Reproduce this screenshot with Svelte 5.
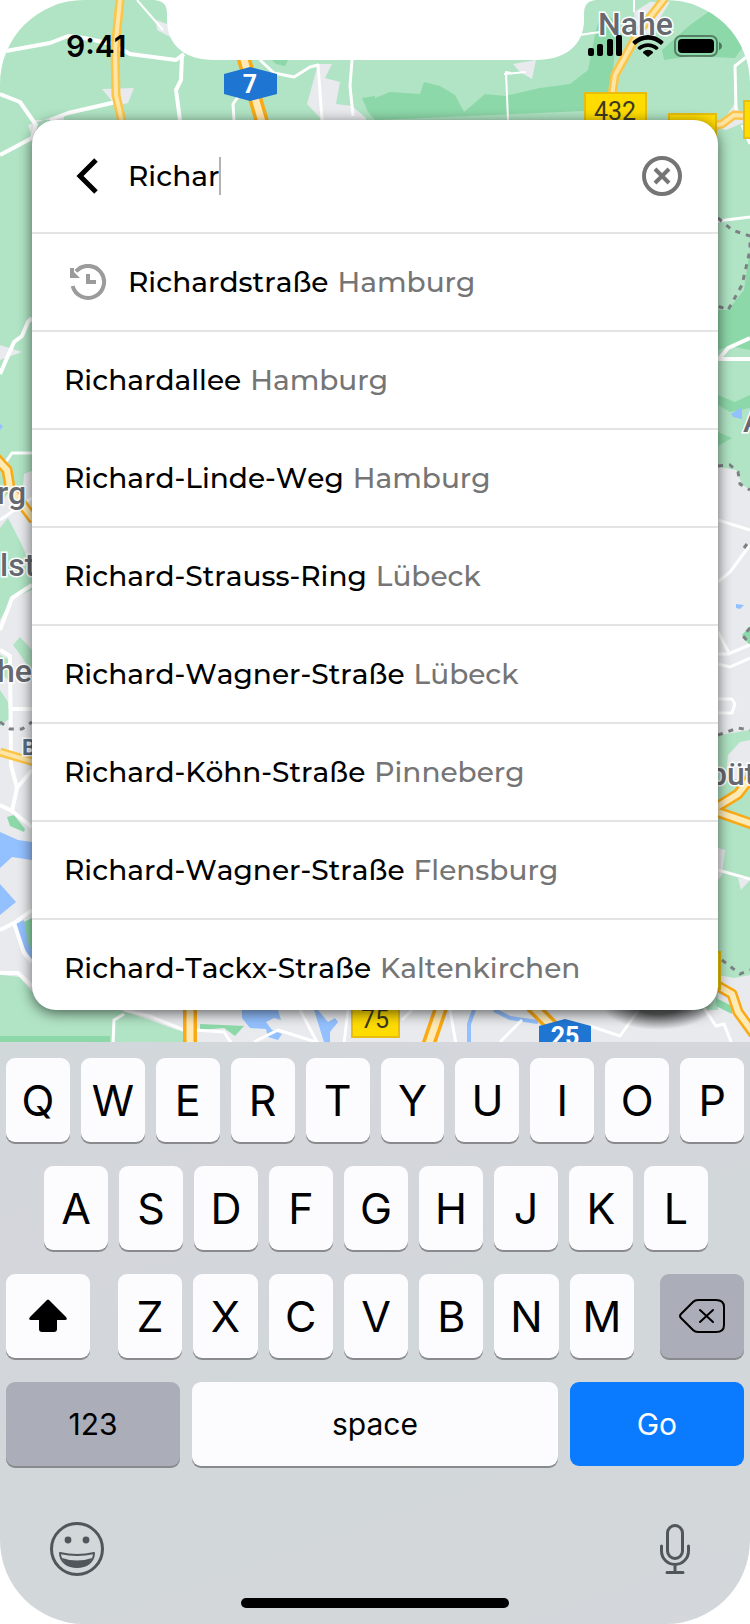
<script lang="ts">
	interface Suggestion {
		street: string;
		city: string;
		recent?: boolean;
	}

	const suggestions: Suggestion[] = [
		{ street: 'Richardstraße', city: 'Hamburg', recent: true },
		{ street: 'Richardallee', city: 'Hamburg' },
		{ street: 'Richard-Linde-Weg', city: 'Hamburg' },
		{ street: 'Richard-Strauss-Ring', city: 'Lübeck' },
		{ street: 'Richard-Wagner-Straße', city: 'Lübeck' },
		{ street: 'Richard-Köhn-Straße', city: 'Pinneberg' },
		{ street: 'Richard-Wagner-Straße', city: 'Flensburg' },
		{ street: 'Richard-Tackx-Straße', city: 'Kaltenkirchen' }
	];

	const topRow = [...'QWERTYUIOP'];
	const homeRow = [...'ASDFGHJKL'];
	const bottomRow = [...'ZXCVBNM'];

	let query = $state('Richar');

	function type(char: string): void {
		query += char.toLowerCase();
	}

	function backspace(): void {
		query = query.slice(0, -1);
	}
</script>

{#snippet letter(char: string)}
	<button class="key" type="button" onclick={() => type(char)}>{char}</button>
{/snippet}

<main class="phone">
	<svg class="map" viewBox="0 0 750 1044" preserveAspectRatio="xMidYMin slice" aria-hidden="true">
		<defs>
			<radialGradient id="pin-shadow">
				<stop offset="0.4" stop-color="#000" stop-opacity="0.6" />
				<stop offset="1" stop-color="#000" stop-opacity="0" />
			</radialGradient>
		</defs>
		<rect width="750" height="1044" fill="#b0e4c4" />

		<!-- built-up areas -->
		<g fill="#e8eaed">
			<path d="M24 474 34 470V1000L20 977 0 975V505L10 490 22 500Z" />
			<path d="M156 20 167 24 172 38 157 30Z M102 89 134 88 128 103 116 106Z M28 125 50 118 64 114V120H36L32 136Z" />
			<path d="M318 64H332L325 78 340 82 336 104 352 106 366 118V120H322L307 104Z" />
			<path d="M513 64 536 60 532 79 520 72Z M634 12 650 2H670L660 18 645 38 636 30Z M718 128 735 103 741 114H750V120L726 130Z" />
			<path d="M0 345 22 352 0 360Z" />
			<path d="M714 466 736 470 742 484 750 490V730L714 736Z" />
			<path d="M728 755 740 742 750 740V765L738 780 726 776Z M718 848 725 850 722 875 718 880Z M738 878 750 880 741 890Z" />
			<path d="M120 1010H750V1044H184L182 1032 150 1020Z" />
			<path d="M718 975 734 978 750 975V1044H718Z" />
		</g>

		<!-- parks and forests -->
		<g fill="#8dd8a9">
			<path d="M375 98 390 92 420 94 424 82 440 86 455 95 464 112 485 94 505 96 540 88 570 84 588 70 596 30 602 12 617 22 612 85 606 110 560 112 375 120Z" />
			<path d="M714 8 735 20 748 40 735 58 690 56 664 60 662 50 690 25Z M272 60H288L285 66 276 64Z M362 98 375 96V120L368 112Z" />
			<path d="M750 250 744 290 728 310H718V350L730 346 750 350Z M718 395 735 402 750 395V408L730 412 718 405Z M718 432 732 438 718 446Z" />
			<path d="M742 635 750 626V645L745 640Z M7 817 14 815 25 829 24 832 10 826Z M24 922 32 918V950L26 942Z" />
			<path d="M0 1036 20 1028 44 1030 70 1036 110 1028V1044H0Z M200 1024 244 1026 235 1036 224 1028 200 1030Z M716 998 732 1006V1014L716 1006Z" />
		</g>
		<g fill="#b0e4c4">
			<path d="M0 528 8 518 22 545 32 570V590L12 598 0 620Z M13 645 20 637 32 650V674L24 660Z M0 655 10 660 8 680 0 672Z M0 690 8 702 10 718 0 726Z" />
			<path d="M0 975 20 978 40 1000 120 1012 112 1036 70 1036 0 1036Z M122 1016 150 1022 184 1032V1044H114Z M718 895 750 890V970L736 976 718 965Z" />
		</g>
		<g fill="#93c0ff">
			<path d="M0 832 18 840 32 842V860L12 857 0 868Z M0 884 16 902 0 915Z M16 924 24 920 28 942 32 950V960L22 945Z M0 424 3 426 0 430Z" />
			<path d="M242 1010H278L281 1020 274 1018 266 1022 272 1030 282 1034 278 1040 268 1037 266 1029 250 1028 242 1018Z M314 1010H318L328 1022 335 1018 338 1022 330 1032V1042H324L319 1026Z" />
			<path d="M731 414 742 407 742 419 733 417Z M736 604 744 605 740 609 736 608Z" />
		</g>
		<g fill="none" stroke="#93c0ff" stroke-width="4">
			<path d="M474 1010 469 1024V1044" />
			<path d="M494 1010 510 1018 538 1022" />
		</g>

		<!-- minor roads -->
		<g fill="none" stroke="#fff" stroke-width="4" stroke-linejoin="round">
			<path d="M6 51 50 43 68 36 84 38 112 44 130 54 176 60 184 54" />
			<path d="M137 0 163 30" stroke-width="2" />
			<path d="M182 54 181 80 176 90 180 120" />
			<path d="M0 94 20 102 36 125 32 138 0 155M50 120 68 113 116 102" />
			<path d="M260 60 274 73 294 77 310 67 318 65 322 120M352 60 350 86 353 116M234 120 233 104 240 94" stroke-width="3" />
			<path d="M511 73 506 72 508 120M526 72 504 74M572 36 600 32M634 0V12" stroke-width="2" />
			<path d="M750 54 735 66 736 110M742 125 750 144M718 221 750 217" stroke-width="3" />
			<path d="M0 374 14 342 22 336 28 322 32 318" />
			<path d="M5 463 12 453 32 453M0 520 32 498" stroke-width="3" />
			<path d="M0 630 12 598 32 585M0 650 10 656 11 765 17 788 32 770M12 709H32M17 788 12 811M0 805 12 811 32 827" />
			<path d="M0 930 14 923 32 910M14 923 24 953 32 962M0 973H18L32 986" />
			<path d="M718 360 728 348 750 338M718 359H750" />
			<path d="M718 520 750 530M718 582 730 572 750 545M718 654 728 654 750 645M718 664 730 667 750 658M718 632 730 655M718 699H732L735 704 732 713H718M718 870 750 879" stroke-width="3" />
			<path d="M113 1044 114 1020 124 1014M124 1010 150 1016 184 1030M195 1030 224 1032 232 1044M254 1042 278 1030 316 1042M300 1010 318 1044M348 1010 344 1044M412 1010 402 1020M450 1010 456 1044M500 1042 522 1020M590 1026 620 1036 640 1008M704 1008 716 1026 724 1024 732 1044" stroke-width="3" />
		</g>
		<path
			d="M718 218 732 230 750 236V250L742 285 728 310 718 306M718 466 730 465 738 472 740 484 750 490M744 548 750 540M750 628 743 636 750 644M718 735 738 728 750 730M0 722 10 729 22 729 32 722M722 960 740 974 750 970"
			fill="none"
			stroke="#7d8084"
			stroke-width="3"
			stroke-dasharray="5 6"
		/>

		<!-- major roads: casing, then fill -->
		<g fill="none" stroke-linejoin="round">
			<g stroke="#fbc548" stroke-width="9">
				<path d="M120 0 115 50 116 95 122 122M665-2 640 30 615 75 612 96M712 126 722 124 734 115 750 116" />
				<path d="M0 752 34 762" />
			</g>
			<g stroke="#fba914" stroke-width="14">
				<path d="M243 56 262 122M190 1008V1046M441 1008 428 1046M530 1004 556 1030" />
				<path d="M-4 458 7 470 10 488 34 520M712 810 738 794 752 776M712 810 752 824M716 985 732 994 738 1012 754 1034" stroke-width="11" />
			</g>
			<g stroke="#fee5a5" stroke-width="4">
				<path d="M120 0 115 50 116 95 122 122M665-2 640 30 615 75 612 96M712 126 722 124 734 115 750 116" />
				<path d="M0 752 34 762" />
			</g>
			<g stroke="#feeab5" stroke-width="7">
				<path d="M243 56 262 122M190 1008V1046M441 1008 428 1046M530 1004 556 1030" />
				<path d="M-4 458 7 470 10 488 34 520M712 810 738 794 752 776M712 810 752 824M716 985 732 994 738 1012 754 1034" stroke-width="6" />
			</g>
		</g>

		<!-- road numbers -->
		<g fill="#ffdc00" stroke="#e6bd10" stroke-width="2">
			<rect x="585" y="93" width="61" height="40" />
			<rect x="669" y="114" width="47" height="36" />
			<rect x="744" y="101" width="30" height="37" />
			<rect x="352" y="1000" width="47" height="37" />
			<rect x="690" y="952" width="30" height="37" />
		</g>
		<g fill="#1f76d2">
			<path d="M224 74 250 67 277 74V94L250 101 224 94Z" />
			<path d="M539 1026 565 1019 591 1026V1044H539Z" />
		</g>
		<g class="road-number">
			<text x="615" y="120">432</text>
			<text x="375" y="1028">75</text>
			<text class="motorway" x="250" y="93">7</text>
			<text class="motorway" x="565" y="1045">25</text>
		</g>
		<g class="place">
			<text x="598" y="35">Nahe</text>
			<text x="-3" y="504">rg</text>
			<text x="0" y="576">lst</text>
			<text x="-3" y="682">he</text>
			<text x="743" y="432">A</text>
			<text x="709" y="785">büt</text>
			<text class="district" x="22" y="755">B</text>
		</g>
		<ellipse cx="658" cy="1004" rx="56" ry="26" fill="url(#pin-shadow)" />
	</svg>

	<svg class="notch" viewBox="0 0 442 60" width="442" height="60" aria-hidden="true">
		<path d="M0 0C9 1 13 4 13 14V20C13 46 32 60 60 60H382C410 60 430 46 430 20V14C430 4 434 1 442 0Z" fill="#fff" />
	</svg>

	<header class="status">
		<time class="clock">9:41</time>
		<div class="status-icons">
			<svg width="34" height="22" viewBox="0 0 34 22" role="img" aria-label="Signal">
				<rect x="0" y="13" width="6" height="8" rx="2" />
				<rect x="9" y="9" width="6" height="12" rx="2" />
				<rect x="19" y="4" width="6" height="17" rx="2" />
				<rect x="28" y="0" width="6" height="21" rx="2" />
			</svg>
			<svg width="32" height="22" viewBox="0 0 32 22" role="img" aria-label="Wi-Fi">
				<path d="M1 6C10-2 22-2 31 6Q32 7 31 8L29 10C21 3 11 3 3 10L1 8Q0 7 1 6Z" />
				<path d="M6 12C12 7 20 7 26 12Q27 13 26 14L24 15C19 11 13 11 8 15L6 14Q5 13 6 12Z" />
				<path d="M11 17C14 14 18 14 21 17Q21 18 21 18L16 22 11 18Z" />
			</svg>
			<svg width="48" height="22" viewBox="0 0 48 22" role="img" aria-label="Battery">
				<rect x="1" y="1" width="42" height="20" rx="6" fill="none" stroke="#000" stroke-opacity=".4" stroke-width="2" />
				<rect x="4" y="4" width="36" height="14" rx="4" />
				<path d="M45 7C49 9 49 13 45 15Z" fill-opacity=".45" />
			</svg>
		</div>
	</header>

	<section class="card">
		<form class="search" onsubmit={(e) => e.preventDefault()}>
			<button class="icon-button" type="button" aria-label="Back">
				<svg width="36" height="40" viewBox="0 0 36 40" fill="none" stroke="#000" stroke-width="5">
					<path d="M28 4 12 20 28 36" />
				</svg>
			</button>
			<div class="field">
				<input type="text" aria-label="Street" autocomplete="off" size="6" bind:value={query} />
				<span class="caret"></span>
			</div>
			<button class="icon-button" type="button" aria-label="Clear" onclick={() => (query = '')}>
				<svg width="40" height="40" viewBox="0 0 40 40" fill="none" stroke="#757575" stroke-width="4">
					<circle cx="20" cy="20" r="18" />
					<path d="M13 13 27 27M27 13 13 27" />
				</svg>
			</button>
		</form>

		<ul class="suggestions">
			{#each suggestions as { street, city, recent }}
				<li>
					<button class="suggestion" type="button" onclick={() => (query = street)}>
						{#if recent}
							<svg class="history" width="48" height="36" viewBox="0 0 48 36" fill="none" stroke="#9b9b9b" stroke-width="4" aria-hidden="true">
								<path d="M12 7.4A16 16 0 1 1 8.6 22" />
								<path d="M6 4H10V8L16 14H6ZM22 10H26V16H32V20H22Z" fill="#9b9b9b" stroke="none" />
							</svg>
						{/if}
						<span>{street}</span>
						<span class="city">{city}</span>
					</button>
				</li>
			{/each}
		</ul>
	</section>

	<section class="keyboard" aria-label="Keyboard">
		<div class="row">
			{#each topRow as char}
				{@render letter(char)}
			{/each}
		</div>
		<div class="row inset">
			{#each homeRow as char}
				{@render letter(char)}
			{/each}
		</div>
		<div class="row">
			<button class="key modifier" type="button" aria-label="Shift">
				<svg width="38" height="34" viewBox="0 0 38 34">
					<path d="M18 1Q19 0 20 1L37 18Q39 21 36 21H28V30Q28 33 25 33H13Q10 33 10 30V21H2Q-1 21 1 18Z" />
				</svg>
			</button>
			<div class="row letters">
				{#each bottomRow as char}
					{@render letter(char)}
				{/each}
			</div>
			<button class="key modifier dark" type="button" aria-label="Delete" onclick={backspace}>
				<svg width="46" height="34" viewBox="0 0 46 34" fill="none" stroke="#000" stroke-width="2" stroke-linecap="round">
					<path d="M19 1H37Q45 1 45 8V26Q45 33 37 33H19Q16 33 14 31L2 19Q0 17 2 15L14 3Q16 1 19 1Z" />
					<path d="M21 11 34 23M34 11 21 23" />
				</svg>
			</button>
		</div>
		<div class="row wide">
			<button class="key word dark" type="button">123</button>
			<button class="key word space" type="button" onclick={() => type(' ')}>space</button>
			<button class="key word go" type="button">Go</button>
		</div>

		<div class="extras">
			<button class="icon-button" type="button" aria-label="Emoji">
				<svg width="54" height="54" viewBox="0 0 54 54" fill="none" stroke="#50565b" stroke-width="3">
					<circle cx="27" cy="27" r="25.5" />
					<path d="M10 31Q27 35 44 31C44 40 36 45 27 45S10 40 10 31Z" stroke-width="2" stroke-linejoin="round" />
					<path d="M12 36Q27 41 42 36C39 43 33 45 27 45S15 43 12 36Z" fill="#50565b" stroke="none" />
					<circle cx="18" cy="18" r="3.4" fill="#50565b" stroke="none" />
					<circle cx="36" cy="18" r="3.4" fill="#50565b" stroke="none" />
				</svg>
			</button>
			<button class="icon-button" type="button" aria-label="Dictate">
				<svg width="30" height="50" viewBox="0 0 30 50" fill="none" stroke="#50565b" stroke-width="3" stroke-linecap="round">
					<rect x="7.5" y="1.5" width="15" height="33" rx="7.5" />
					<path d="M1.5 22V27A13.500 13.500 0 0 0 28.500 27V22M15 41V48M7 48.500H23" />
				</svg>
			</button>
		</div>
		<div class="home-indicator"></div>
	</section>
</main>

<style>
	:global(body) {
		margin: 0;
		background: #fff;
	}

	.phone {
		position: relative;
		overflow: hidden;
		border-radius: 84px;
		font-family: Inter, sans-serif;
		color: #000;
	}

	button,
	input {
		margin: 0;
		padding: 0;
		border: 0;
		background: none;
		color: inherit;
		font: inherit;
	}

	svg {
		display: block;
		flex: none;
	}

	/* the map and the notch lie behind the flowing content */
	.map {
		position: absolute;
		top: 0;
		left: 0;
		width: 100%;
		height: auto;
	}

	.notch {
		position: absolute;
		top: 0;
		left: 50%;
		transform: translateX(-50%);
	}

	.road-number {
		font: 25px Roboto, sans-serif;
		fill: #3c3a20;
		text-anchor: middle;
	}

	.motorway {
		font-weight: 700;
		fill: #fff;
	}

	.place {
		font: 500 32px Roboto, sans-serif;
		fill: #666a70;
		stroke: #fff;
		stroke-width: 3px;
		paint-order: stroke;
	}

	.district {
		font-size: 22px;
		font-weight: 700;
		fill: #5c6c80;
	}

	.status {
		position: relative;
		display: flex;
		align-items: flex-start;
		justify-content: space-between;
		height: 92px;
		padding: 28px 28px 0 66px;
	}

	.clock {
		font-size: 30px;
		font-weight: 600;
		line-height: 36px;
	}

	.status-icons {
		display: flex;
		gap: 10px;
		padding-top: 7px;
	}

	.card {
		position: relative;
		margin: 0 32px 32px;
		overflow: hidden;
		border-radius: 24px;
		background: #fff;
		box-shadow: 0 3px 14px rgba(0, 0, 0, 0.6);
		font-family: Montserrat, Inter, sans-serif;
		font-size: 28px;
		font-weight: 500;
		font-kerning: none;
	}

	.search {
		display: flex;
		align-items: center;
		height: 112px;
		padding: 0 36px;
		border-bottom: 2px solid #e4e4e4;
	}

	.field {
		display: flex;
		flex: 1;
		align-items: center;
		min-width: 0;
		padding-left: 24px;
	}

	.field input {
		field-sizing: content;
		min-width: 0;
		outline: none;
		caret-color: transparent;
		font-kerning: none;
	}

	.caret {
		width: 2px;
		height: 38px;
		background: #b3b3b3;
	}

	.icon-button {
		flex: none;
		cursor: pointer;
	}

	.suggestions {
		margin: 0 0 -6px;
		padding: 0;
		list-style: none;
	}

	.suggestions li + li {
		border-top: 2px solid #e4e4e4;
	}

	.suggestion {
		display: flex;
		align-items: center;
		gap: 9px;
		width: 100%;
		padding: 0 32px;
		line-height: 96px;
		text-align: left;
		white-space: nowrap;
		font-kerning: none;
		cursor: pointer;
	}

	.history {
		margin-right: 7px;
	}

	.city {
		color: #757575;
	}

	.keyboard {
		position: relative;
		display: flex;
		flex-direction: column;
		gap: 24px;
		padding: 16px 6px;
		background: linear-gradient(160deg, #d1d8da, #d4d6dc 25%, #d2d7da 50%, #d3d7db);
	}

	.row {
		display: flex;
		gap: 11px;
	}

	.row.inset {
		padding: 0 36px 0 38px;
	}

	.row.letters {
		flex: 1;
		padding: 0 15px 0 17px;
	}

	.row.wide {
		gap: 12px;
	}

	.key {
		display: flex;
		flex: 1 1 0;
		align-items: center;
		justify-content: center;
		min-width: 0;
		height: 84px;
		border-radius: 9px;
		background: #fcfcfe;
		box-shadow: 0 2px 0 #898a8d;
		font-size: 43px;
		cursor: pointer;
	}

	.key.modifier {
		flex: 0 0 84px;
	}

	.key.dark {
		background: #abadb9;
	}

	.key.word {
		flex-grow: 10;
		font-size: 30px;
	}

	.key.space {
		flex-grow: 21;
	}

	.key.go {
		background: #0a7aff;
		box-shadow: none;
		color: #fff;
	}

	.extras {
		display: flex;
		align-items: center;
		justify-content: space-between;
		margin-bottom: -2px;
		padding: 32px 54px 0 44px;
	}

	.home-indicator {
		align-self: center;
		width: 268px;
		height: 10px;
		border-radius: 5px;
		background: #000;
	}
</style>
